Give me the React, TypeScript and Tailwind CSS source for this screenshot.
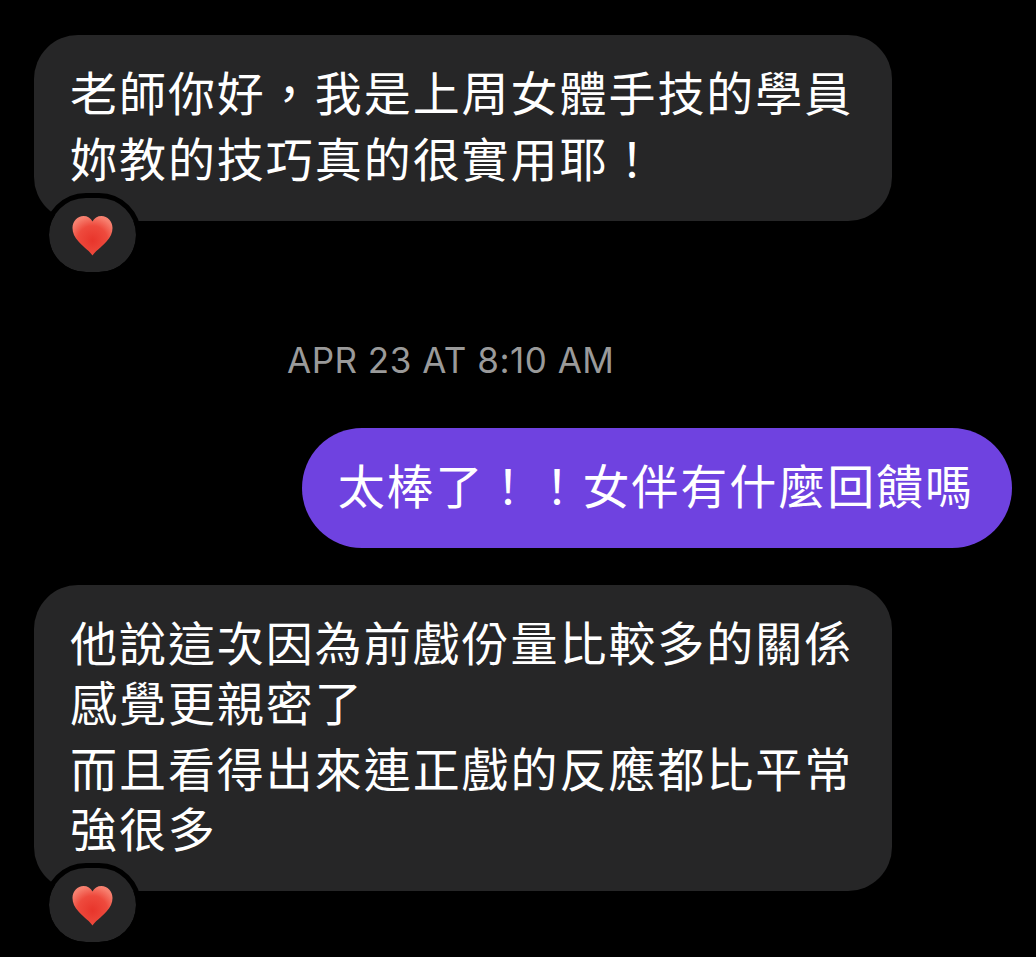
const cjk = { fontFamily: '"Noto Sans CJK TC", "Liberation Sans", sans-serif' }

function Heart() {
  return (
    <svg viewBox="0 0 41 41" className="h-[41px] w-[41px]" aria-hidden>
      <defs>
        <radialGradient id="heart-fill" cx="0.5" cy="0.62" r="0.62">
          <stop offset="0" stopColor="#e8352b" />
          <stop offset="0.6" stopColor="#ee4a3d" />
          <stop offset="1" stopColor="#f7806f" />
        </radialGradient>
      </defs>
      <path
        d="M20.500 40.500C18.500 37 12 32.500 6.500 26.500 2.500 22 .5 18 .5 13 .5 6 5.500 1 11.500 1c4 0 7.300 2 9 5.500C22.200 3 25.500 1 29.500 1c6 0 11 5 11 12 0 5-2 9-6 13.500-5.500 6-12 10.500-14 14Z"
        fill="url(#heart-fill)"
      />
    </svg>
  )
}

function Reaction() {
  return (
    <div className="absolute bottom-[-51px] left-[15px] flex h-[74px] w-[87px] items-center justify-center rounded-full bg-[#262627] pt-[1px] outline-[5px] outline-black">
      <Heart />
    </div>
  )
}

function Incoming({ paragraphs }: { paragraphs: string[][] }) {
  return (
    <div className="relative w-[858px] rounded-[44px] bg-[#262627] pt-[26px] pb-[34px] pl-[36px] text-[47px] leading-[60px] tracking-[1.95px] text-white">
      <div className="flex flex-col gap-[6px]">
        {paragraphs.map((lines) => (
          <div key={lines[0]}>
            {lines.map((line) => (
              <div key={line} className="whitespace-nowrap">
                {line}
              </div>
            ))}
          </div>
        ))}
      </div>
      <Reaction />
    </div>
  )
}

export default function App() {
  return (
    <div className="min-h-[957px] bg-black pt-[35px] pl-[34px]" style={cjk}>
      <Incoming paragraphs={[['老師你好\uFF0C我是上周女體手技的學員'], ['妳教的技巧真的很實用耶\uFF01']]} />
      <p
        className="mt-[119px] pl-[253px] text-[35px] leading-[40px] tracking-[0.5px] text-[#9a9a9a]"
        style={{ fontFamily: 'Inter, sans-serif' }}
      >
        APR 23 AT 8:10 AM
      </p>
      <div className="mt-[48px] flex justify-end pr-[24px]">
        <div className="flex h-[120px] items-center rounded-[60px] bg-[#6f42e0] pr-[38px] pb-[8px] pl-[36px] text-[47px] tracking-[1.95px] whitespace-nowrap text-white">
          太棒了{'\uFF01\uFF01'}女伴有什麼回饋嗎
        </div>
      </div>
      <div className="mt-[37px]">
        <Incoming
          paragraphs={[
            ['他說這次因為前戲份量比較多的關係', '感覺更親密了'],
            ['而且看得出來連正戲的反應都比平常', '強很多'],
          ]}
        />
      </div>
    </div>
  )
}
